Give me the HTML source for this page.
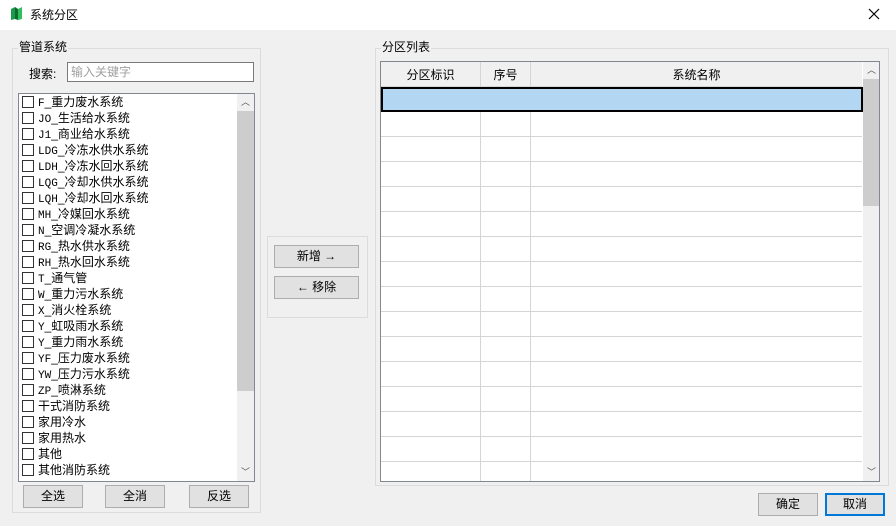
<!DOCTYPE html><html><head><meta charset="utf-8"><style>
*{box-sizing:border-box;margin:0;padding:0}
body{width:896px;height:526px;background:#f0f0f0;font-family:"Liberation Sans","Noto Sans CJK SC",sans-serif;font-size:12px;color:#000;position:relative;overflow:hidden}
.a{position:absolute}
.title{left:0;top:0;width:896px;height:30px;background:#fff}
.grp{border:1px solid #dcdcdc}
.leg{background:#f0f0f0;padding:0 1px;line-height:14px}
.btn{background:#e1e1e1;border:1px solid #adadad;text-align:center;line-height:20px}
.row{height:16px;line-height:16px;white-space:nowrap;font-size:12px}
.cb{display:inline-block;width:12px;height:12px;border:1px solid #333;background:#fff;vertical-align:-2px;margin:0 4px 0 3px}
.mono{font-family:"Liberation Mono","Noto Sans CJK SC",monospace;font-size:11px}
</style></head><body>
<div class="a title">
<svg class="a" style="left:10px;top:6px" width="13" height="15" viewBox="0 0 13 15"><path d="M1 3 L5 1 L5 13 L1 14Z" fill="#1a9b4a"/><path d="M5 1 L8 3 L8 14 L5 13Z" fill="#0d6b30"/><path d="M8 3 L12 1 L12 13 L8 14Z" fill="#2fbf5f"/></svg>
<div class="a" style="left:30px;top:6px">系统分区</div>
<svg class="a" style="left:868px;top:8px" width="12" height="12" viewBox="0 0 12 12"><path d="M1 1L11 11M11 1L1 11" stroke="#000" stroke-width="1.2"/></svg>
</div>
<div class="a grp" style="left:12px;top:48px;width:249px;height:465px"></div>
<div class="a leg" style="left:18px;top:40px">管道系统</div>
<div class="a" style="left:29px;top:65px">搜索:</div>
<div class="a" style="left:67px;top:62px;width:187px;height:20px;border:1px solid #7a7a7a;background:#fff;color:#a0a0a0;padding:1px 3px;line-height:16px">输入关键字</div>
<div class="a" style="left:18px;top:93px;width:237px;height:389px;border:1px solid #828790;background:#fff">
<div class="a" style="left:0;top:0;width:217px">
<div class="row"><span class="cb"></span><span class="mono">F</span>_重力废水系统</div>
<div class="row"><span class="cb"></span><span class="mono">JO</span>_生活给水系统</div>
<div class="row"><span class="cb"></span><span class="mono">J1</span>_商业给水系统</div>
<div class="row"><span class="cb"></span><span class="mono">LDG</span>_冷冻水供水系统</div>
<div class="row"><span class="cb"></span><span class="mono">LDH</span>_冷冻水回水系统</div>
<div class="row"><span class="cb"></span><span class="mono">LQG</span>_冷却水供水系统</div>
<div class="row"><span class="cb"></span><span class="mono">LQH</span>_冷却水回水系统</div>
<div class="row"><span class="cb"></span><span class="mono">MH</span>_冷媒回水系统</div>
<div class="row"><span class="cb"></span><span class="mono">N</span>_空调冷凝水系统</div>
<div class="row"><span class="cb"></span><span class="mono">RG</span>_热水供水系统</div>
<div class="row"><span class="cb"></span><span class="mono">RH</span>_热水回水系统</div>
<div class="row"><span class="cb"></span><span class="mono">T</span>_通气管</div>
<div class="row"><span class="cb"></span><span class="mono">W</span>_重力污水系统</div>
<div class="row"><span class="cb"></span><span class="mono">X</span>_消火栓系统</div>
<div class="row"><span class="cb"></span><span class="mono">Y</span>_虹吸雨水系统</div>
<div class="row"><span class="cb"></span><span class="mono">Y</span>_重力雨水系统</div>
<div class="row"><span class="cb"></span><span class="mono">YF</span>_压力废水系统</div>
<div class="row"><span class="cb"></span><span class="mono">YW</span>_压力污水系统</div>
<div class="row"><span class="cb"></span><span class="mono">ZP</span>_喷淋系统</div>
<div class="row"><span class="cb"></span>干式消防系统</div>
<div class="row"><span class="cb"></span>家用冷水</div>
<div class="row"><span class="cb"></span>家用热水</div>
<div class="row"><span class="cb"></span>其他</div>
<div class="row"><span class="cb"></span>其他消防系统</div>
</div>
<div class="a" style="left:218px;top:0;width:17px;height:387px;background:#f0f0f0">
<div class="a" style="left:0;top:0;width:17px;height:17px;text-align:center;font-size:9px;line-height:17px;color:#555">︿</div>
<div class="a" style="left:0;top:17px;width:17px;height:280px;background:#cdcdcd"></div>
<div class="a" style="left:0;top:370px;width:17px;height:17px;text-align:center;font-size:9px;line-height:17px;color:#555">﹀</div>
</div>
</div>
<div class="a btn" style="left:23px;top:485px;width:60px;height:23px">全选</div>
<div class="a btn" style="left:105px;top:485px;width:60px;height:23px">全消</div>
<div class="a btn" style="left:189px;top:485px;width:60px;height:23px">反选</div>

<div class="a grp" style="left:267px;top:236px;width:101px;height:82px"></div>
<div class="a btn" style="left:274px;top:245px;width:85px;height:23px">新增 →</div>
<div class="a btn" style="left:274px;top:276px;width:85px;height:23px">← 移除</div>

<div class="a grp" style="left:375px;top:48px;width:514px;height:438px"></div>
<div class="a leg" style="left:381px;top:40px">分区列表</div>
<div class="a" style="left:380px;top:61px;width:500px;height:421px;border:1px solid #828790;background:#fff;overflow:hidden">
<div class="a" style="left:0;top:0;width:481px;height:25px;background:#f0f0f0;border-bottom:1px solid #d5d5d5"></div>
<div class="a" style="left:99px;top:0;width:1px;height:421px;background:#d5d5d5"></div>
<div class="a" style="left:149px;top:0;width:1px;height:421px;background:#d5d5d5"></div>
<div class="a" style="left:0;top:4px;width:99px;text-align:center">分区标识</div>
<div class="a" style="left:100px;top:4px;width:49px;text-align:center">序号</div>
<div class="a" style="left:150px;top:4px;width:331px;text-align:center">系统名称</div>
<div class="a" style="left:0;top:25px;width:482px;height:25px;background:#b3d7f3;border:2px solid #000"></div>
<div class="a" style="left:0;top:74px;width:481px;height:1px;background:#d5d5d5;box-shadow:0 25px #d5d5d5,0 50px #d5d5d5,0 75px #d5d5d5,0 100px #d5d5d5,0 125px #d5d5d5,0 150px #d5d5d5,0 175px #d5d5d5,0 200px #d5d5d5,0 225px #d5d5d5,0 250px #d5d5d5,0 275px #d5d5d5,0 300px #d5d5d5,0 325px #d5d5d5"></div>
<div class="a" style="left:482px;top:0;width:17px;height:419px;background:#f0f0f0">
<div class="a" style="left:0;top:0;width:17px;height:17px;text-align:center;font-size:9px;line-height:17px;color:#555">︿</div>
<div class="a" style="left:0;top:17px;width:17px;height:127px;background:#cdcdcd"></div>
<div class="a" style="left:0;top:402px;width:17px;height:17px;text-align:center;font-size:9px;line-height:17px;color:#555">﹀</div>
</div>
</div>
<div class="a btn" style="left:758px;top:493px;width:60px;height:23px">确定</div>
<div class="a btn" style="left:825px;top:493px;width:60px;height:23px;border:2px solid #0078d7;line-height:19px">取消</div>
</body></html>
